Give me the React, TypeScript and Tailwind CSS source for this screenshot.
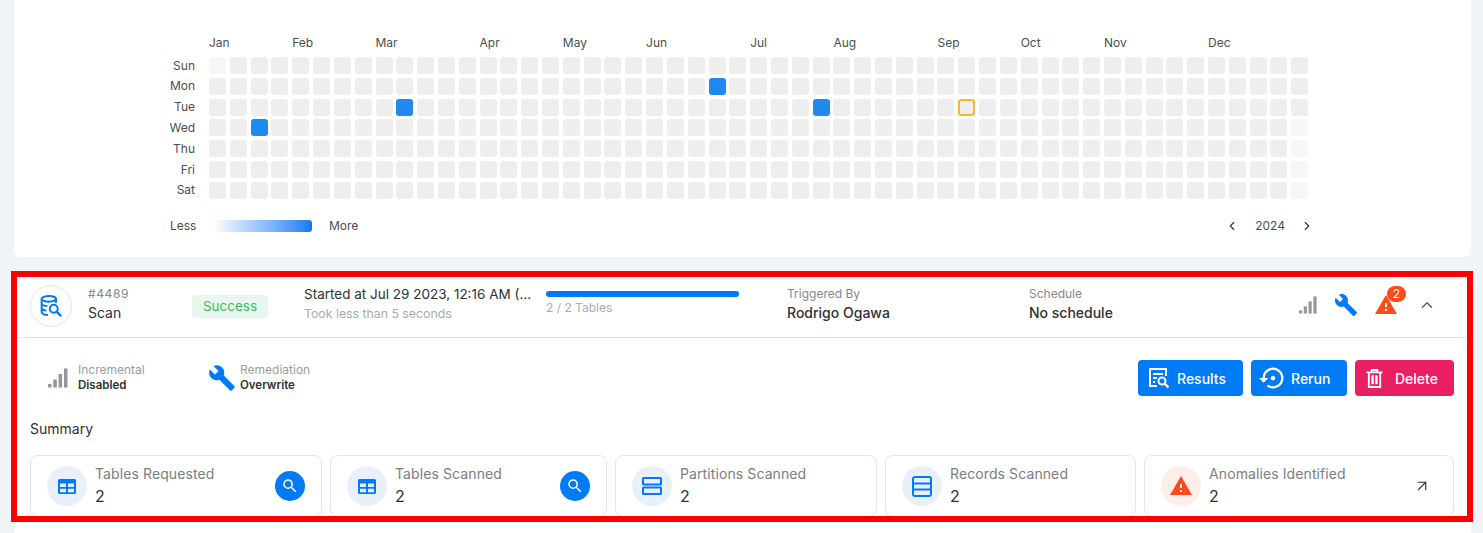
import React from 'react';
import { ChevronLeft, ChevronRight, ChevronUp, ArrowUpRight } from 'lucide-react';
import { MdBuild, MdSearch, MdWarning, MdSettingsBackupRestore } from 'react-icons/md';

const months = [
  { name: 'Jan', span: 'col-span-4' },
  { name: 'Feb', span: 'col-span-4' },
  { name: 'Mar', span: 'col-span-5' },
  { name: 'Apr', span: 'col-span-4' },
  { name: 'May', span: 'col-span-4' },
  { name: 'Jun', span: 'col-span-5' },
  { name: 'Jul', span: 'col-span-4' },
  { name: 'Aug', span: 'col-span-5' },
  { name: 'Sep', span: 'col-span-4' },
  { name: 'Oct', span: 'col-span-4' },
  { name: 'Nov', span: 'col-span-5' },
  { name: 'Dec', span: 'col-span-5' },
];
const days = ['Sun', 'Mon', 'Tue', 'Wed', 'Thu', 'Fri', 'Sat'];

const cellClass = (row: number, col: number) => {
  if ((row === 3 && col === 2) || (row === 2 && col === 9) || (row === 1 && col === 24) || (row === 2 && col === 29)) {
    return 'bg-[#2089f0]';
  }
  if (row === 2 && col === 36) return 'bg-[#eeeeee] border-2 border-[#fbb52f]';
  if ((row === 0 && col === 0) || (row > 2 && col === 52)) return 'bg-[#f7f7f7]';
  return 'bg-[#eeeeee]';
};

const SignalIcon = ({ className }: { className: string }) => (
  <svg viewBox="0 0 20 20" className={className} fill="#92979c">
    <rect x="0" y="16" width="3.5" height="3.5" />
    <rect x="5.3" y="11.5" width="3.5" height="8" />
    <rect x="10.6" y="6" width="3.5" height="13.5" />
    <rect x="16" y="0.5" width="3.5" height="19" />
  </svg>
);

const ScanIcon = () => (
  <svg viewBox="0 0 20 20" className="w-[22px] h-[22px]" fill="none" stroke="#007bf5" strokeWidth="1.800" strokeLinecap="round">
    <ellipse cx="8" cy="3.500" rx="6.500" ry="2.600" />
    <path d="M1.500 3.500v12c0 1.500 2.500 2.600 5 2.600M14.500 3.500v3M1.500 7.500c0 1.300 2 2.300 4.500 2.500M1.500 11.500c0 1.300 1.600 2.200 3.500 2.500" />
    <circle cx="12.500" cy="12.500" r="3.600" />
    <path d="M15.200 15.200l3.300 3.300" strokeWidth="2.200" />
  </svg>
);

const ResultsIcon = () => (
  <svg viewBox="0 0 20 21" className="w-[20px] h-[21px]" fill="none" stroke="#ffffff" strokeWidth="2">
    <path d="M8 18H1V1h16v7" />
    <path d="M4 6h10M4 10h4M4 14h2" />
    <circle cx="13" cy="13" r="3.500" />
    <path d="M15.500 15.500l4 4" strokeWidth="2.400" />
  </svg>
);

const TableIcon = () => (
  <svg viewBox="0 0 18 15" className="w-[18px] h-[15px]" fill="#007bf5">
    <path d="M1.500 0h15A1.500 1.500 0 0 1 18 1.500v12a1.500 1.500 0 0 1-1.500 1.500h-15A1.500 1.500 0 0 1 0 13.500v-12A1.500 1.500 0 0 1 1.500 0Zm.5 4.500v3.500h6V4.500Zm8 0v3.500h6V4.500ZM2 9.800v3.400h6V9.800Zm8 0v3.400h6V9.800Z" fillRule="evenodd" />
  </svg>
);

const PartitionIcon = () => (
  <svg viewBox="0 0 20 18" className="w-[20px] h-[18px]" fill="none" stroke="#007bf5" strokeWidth="2">
    <rect x="1" y="1" width="18" height="6.500" rx="0.500" />
    <rect x="1" y="10.500" width="18" height="6.500" rx="0.500" />
  </svg>
);

const RecordsIcon = () => (
  <svg viewBox="0 0 20 21" className="w-[20px] h-[21px]" fill="none" stroke="#007bf5" strokeWidth="2">
    <rect x="1" y="1" width="18" height="19" rx="2" />
    <path d="M1 7.500h18M1 13.500h18" />
  </svg>
);

const TrashIcon = () => (
  <svg viewBox="0 0 18 20" className="w-[17px] h-[19px]" fill="none" stroke="#ffffff" strokeWidth="2">
    <path d="M0.500 3.500h17M6 3.500V1h6v2.500M3 3.500V19h12V3.500" />
    <path d="M7 6.500v9.500M11 6.500v9.500" strokeWidth="2.500" />
  </svg>
);

const summary = [
  { label: 'Tables Requested', width: 'w-[292px]', icon: <TableIcon />, tint: 'bg-[#eaf0fb]', action: 'search' },
  { label: 'Tables Scanned', width: 'w-[277px]', icon: <TableIcon />, tint: 'bg-[#eaf0fb]', action: 'search' },
  { label: 'Partitions Scanned', width: 'w-[262px]', icon: <PartitionIcon />, tint: 'bg-[#eaf0fb]', action: '' },
  { label: 'Records Scanned', width: 'w-[251px]', icon: <RecordsIcon />, tint: 'bg-[#eaf0fb]', action: '' },
  {
    label: 'Anomalies Identified',
    width: 'w-[310px]',
    icon: <MdWarning className="text-[#fc4a1a] w-[24px] h-[24px]" />,
    tint: 'bg-[#fdeee9]',
    action: 'arrow',
  },
];

const App: React.FC = () => {
  return (
    <div className="h-[533px] overflow-hidden bg-[#f0f4f9] pl-[14px] pr-[12px] font-['Inter',sans-serif] text-[#2f3133]">
      {/* Heatmap card */}
      <section className="h-[257px] bg-white rounded-b-md pt-[36px] pl-[156px]">
        <div className="flex gap-[14px]">
          <div className="w-[25px]" />
          <div className="w-[1100px] grid grid-cols-[repeat(53,17px)] gap-x-[3.825px] h-[14px] text-[12px] leading-[14px] text-[#4b4d50]">
            {months.map((m) => (
              <span key={m.name} className={m.span}>
                {m.name}
              </span>
            ))}
          </div>
        </div>
        <div className="flex gap-[14px] mt-[7px]">
          <div className="w-[25px] -mt-[0.5px] flex flex-col items-end gap-[3.825px] text-[12px] text-[#4b4d50]">
            {days.map((d) => (
              <span key={d} className="h-[17px] leading-[17px]">
                {d}
              </span>
            ))}
          </div>
          <div className="w-[1100px] grid grid-cols-[repeat(53,17px)] grid-rows-[repeat(7,17px)] grid-flow-col gap-[3.825px]">
            {days.map((d, row) =>
              Array.from({ length: 53 }).map((_, col) => (
                <div
                  key={d + col}
                  className={`rounded-[3px] ${cellClass(row, col)}`}
                  style={{ gridRow: row + 1, gridColumn: col + 1 }}
                />
              )),
            )}
          </div>
        </div>
        <div className="flex items-center h-[14px] mt-[20px] text-[12px] text-[#4b4d50] w-[1144px]">
          <span className="w-[43px]">Less</span>
          <div className="w-[99px] h-[12px] rounded-r-[3px] bg-gradient-to-r from-white to-[#007bf5]" />
          <span className="ml-[17px]">More</span>
          <div className="ml-auto flex items-center">
            <ChevronLeft className="w-[14px] h-[14px] text-[#33363a]" strokeWidth={2} />
            <span className="ml-[16px] mr-[15px]">2024</span>
            <ChevronRight className="w-[14px] h-[14px] text-[#33363a]" strokeWidth={2} />
          </div>
        </div>
      </section>

      {/* Scan details card */}
      <section className="relative mt-[17px] h-[300px] bg-white">
        <div className="flex items-center h-[64px] px-[16px] border-b border-[#e4e5e7]">
          <div className="w-[42px] h-[42px] rounded-full border border-[#e3e4e6] flex items-center justify-center shrink-0">
            <ScanIcon />
          </div>
          <div className="w-[104px] ml-[16px] -mt-[4px] shrink-0">
            <div className="text-[12px] leading-[16px] tracking-[0.6px] text-[#85888c]">#4489</div>
            <div className="text-[14px] leading-[18px] mt-[2px]">Scan</div>
          </div>
          <div className="w-[112px] -mt-[1px] shrink-0">
            <span className="inline-block w-[76px] h-[23px] rounded-[4px] bg-[#e8f7ee] text-center text-[13.500px] leading-[23px] text-[#3dbd5f]">
              Success
            </span>
          </div>
          <div className="w-[242px] -mt-[5px] shrink-0">
            <div className="w-[228px] truncate text-[13.500px] leading-[18px]">Started at Jul 29 2023, 12:16 AM (America/Sao_Paulo)</div>
            <div className="text-[12.300px] leading-[16px] mt-[3px] text-[#a8abae]">Took less than 5 seconds</div>
          </div>
          <div className="w-[241px] -mt-[5px] shrink-0">
            <div className="w-[193px] h-[6px] rounded-full bg-[#007bf5]" />
            <div className="text-[12px] leading-[16px] mt-[3px] text-[#a8abae]">2 / 2 Tables</div>
          </div>
          <div className="w-[242px] -mt-[4px] shrink-0">
            <div className="text-[12px] leading-[16px] text-[#85888c]">Triggered By</div>
            <div className="text-[14px] leading-[18px] mt-[2px] font-medium">Rodrigo Ogawa</div>
          </div>
          <div className="flex-1 -mt-[4px]">
            <div className="text-[12px] leading-[16px] text-[#85888c]">Schedule</div>
            <div className="text-[14px] leading-[18px] mt-[2px] font-medium">No schedule</div>
          </div>
          <div className="flex items-center -mt-[2px]">
            <SignalIcon className="w-[18px] h-[18px]" />
            <MdBuild className="ml-[17px] w-[24px] h-[24px] text-[#007bf5]" />
            <div className="relative ml-[16px] w-[24px] h-[24px]">
              <MdWarning className="w-[24px] h-[24px] text-[#fc4a1a]" />
              <span className="absolute -top-[7px] left-[13px] w-[19px] h-[16px] rounded-full bg-[#fc4a1a] text-white text-[12px] leading-[16px] text-center">
                2
              </span>
            </div>
            <ChevronUp className="ml-[20px] mr-[19px] w-[18px] h-[18px] text-[#5c6368]" strokeWidth={2} />
          </div>
        </div>

        <div className="flex items-center h-[36px] mt-[22px] pl-[34px] pr-[17px]">
          <SignalIcon className="w-[20px] h-[20px]" />
          <div className="ml-[10px] w-[130px] -mt-[1px]">
            <div className="text-[12px] leading-[15px] text-[#9a9da0]">Incremental</div>
            <div className="text-[11.500px] leading-[15px] mt-[1.500px] font-semibold">Disabled</div>
          </div>
          <MdBuild className="w-[28px] h-[28px] text-[#007bf5]" />
          <div className="ml-[4px] -mt-[1px]">
            <div className="text-[12px] leading-[15px] text-[#9a9da0]">Remediation</div>
            <div className="text-[11.500px] leading-[15px] mt-[1.500px] font-semibold">Overwrite</div>
          </div>
          <div className="ml-auto flex gap-[8px] text-white text-[14px] font-medium">
            <button className="w-[105px] h-[36px] rounded-[4px] bg-[#007bf5] flex items-center pl-[11px] gap-[8px]">
              <ResultsIcon />
              Results
            </button>
            <button className="w-[96px] h-[36px] rounded-[4px] bg-[#007bf5] flex items-center pl-[8px] gap-[4px]">
              <MdSettingsBackupRestore className="w-[28px] h-[28px]" />
              Rerun
            </button>
            <button className="w-[99px] h-[36px] rounded-[4px] bg-[#ea1e63] flex items-center pl-[11px] gap-[12px]">
              <TrashIcon />
              Delete
            </button>
          </div>
        </div>

        <div className="pl-[16px] mt-[23px] text-[14px] leading-[20px]">Summary</div>

        <div className="flex gap-[8px] pl-[16px] mt-[16px]">
          {summary.map((s) => (
            <div key={s.label} className={`${s.width} h-[62px] shrink-0 rounded-[8px] border border-[#e5e5e7] flex items-center pl-[16px] pr-[16px]`}>
              <div className={`w-[40px] h-[40px] rounded-full flex items-center justify-center shrink-0 ${s.tint}`}>{s.icon}</div>
              <div className="ml-[8px] -mt-[1px]">
                <div className="text-[14px] leading-[18px] tracking-[0.1px] text-[#7b7e82]">{s.label}</div>
                <div className="text-[16px] leading-[20px] mt-[3px]">2</div>
              </div>
              {s.action === 'search' && (
                <div className="ml-auto w-[30px] h-[30px] rounded-full bg-[#007bf5] flex items-center justify-center">
                  <MdSearch className="w-[18px] h-[18px] text-white" />
                </div>
              )}
              {s.action === 'arrow' && <ArrowUpRight className="ml-auto mr-[6px] w-[18px] h-[18px] text-[#2f3133]" strokeWidth={1.500} />}
            </div>
          ))}
        </div>

        {/* Red highlight from the docs screenshot */}
        <div className="absolute -left-[3px] -right-[2px] -top-[3px] h-[251px] border-[6px] border-[#ff0000] pointer-events-none" />
      </section>
    </div>
  );
};

export default App;
